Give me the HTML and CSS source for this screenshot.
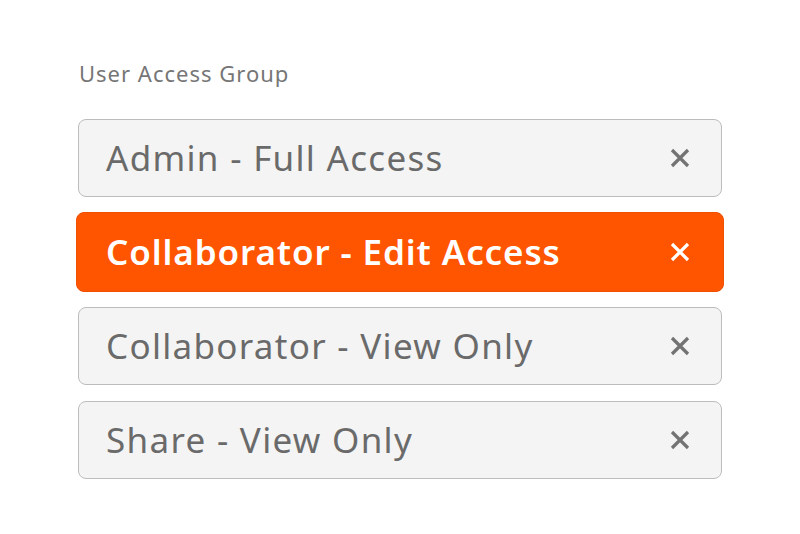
FILE: index.html
```html
<!DOCTYPE html>
<html lang="en">
<head>
  <meta charset="UTF-8">
  <meta name="viewport" content="width=device-width, initial-scale=1.0">
  <title>User Access Group</title>
  <link rel="stylesheet" href="styles.css">
</head>
<body>
  <div class="container">
    <div class="label">User Access Group</div>
    <div class="group-list">
      <div class="group-item">
        <span class="group-name">Admin - Full Access</span>
        <svg class="remove" width="20" height="20" viewBox="0 0 20 20"><path d="M2 2 L18 18 M18 2 L2 18"/></svg>
      </div>
      <div class="group-item selected">
        <span class="group-name">Collaborator - Edit Access</span>
        <svg class="remove" width="20" height="20" viewBox="0 0 20 20"><path d="M2 2 L18 18 M18 2 L2 18"/></svg>
      </div>
      <div class="group-item">
        <span class="group-name">Collaborator - View Only</span>
        <svg class="remove" width="20" height="20" viewBox="0 0 20 20"><path d="M2 2 L18 18 M18 2 L2 18"/></svg>
      </div>
      <div class="group-item">
        <span class="group-name">Share - View Only</span>
        <svg class="remove" width="20" height="20" viewBox="0 0 20 20"><path d="M2 2 L18 18 M18 2 L2 18"/></svg>
      </div>
    </div>
  </div>
</body>
</html>
```

FILE: styles.css
```css
body {
  font-family: "Noto Sans", "Open Sans", sans-serif;
  background-color: #ffffff;
  margin: 0;
  padding: 0;
}
.container {
  width: 644px;
  margin: 0 auto;
  padding-top: 58px;
}
.label {
  font-size: 22px;
  letter-spacing: 1px;
  color: #767676;
  line-height: 30px;
  margin-bottom: 31px;
  margin-left: 1px;
}
.group-list {
  display: flex;
  flex-direction: column;
  gap: 16px;
}
.group-item {
  box-sizing: border-box;
  height: 78px;
  display: flex;
  align-items: center;
  justify-content: space-between;
  padding: 0 31px 0 27px;
  background-color: #f4f4f4;
  border: 1px solid #bcbcbc;
  border-radius: 8px;
  color: #6a6a6a;
}
.group-name {
  font-size: 35px;
  letter-spacing: 1.3px;
  line-height: 40px;
}
.remove {
  stroke: #737373;
  stroke-width: 3.2;
  fill: none;
}
.group-item.selected {
  height: 80px;
  margin: -1px -2px;
  padding: 0 33px 0 29px;
  background-color: #ff5500;
  border-color: #f05000;
  color: #ffffff;
}
.group-item.selected .group-name {
  font-weight: 600;
  letter-spacing: 0.9px;
}
.group-item.selected .remove {
  stroke: #ffffff;
}
```
